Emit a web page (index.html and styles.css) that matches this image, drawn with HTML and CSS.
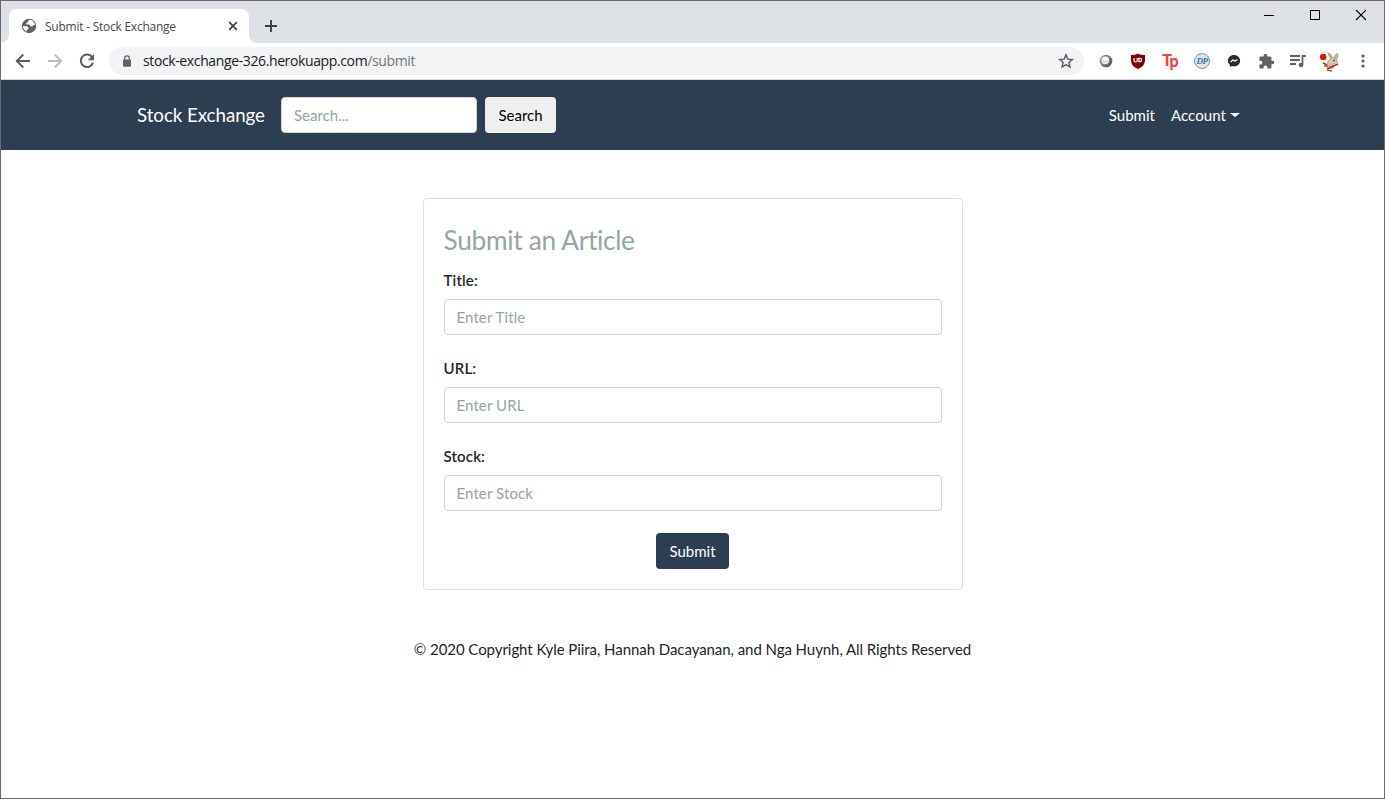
FILE: index.html
```html
<!DOCTYPE html>
<html lang="en">
<head>
<meta charset="utf-8">
<title>Submit - Stock Exchange</title>
<link rel="stylesheet" href="styles.css">
</head>
<body>
<div class="window">
  <div class="tabstrip">
    <div class="tab">
      <svg class="globe" width="16" height="16" viewBox="0 0 16 16"><circle cx="8" cy="8" r="7.2" fill="#5f6368"/><path d="M8.6 1.8 L6.8 3.2 6.9 4.4 5.2 5 5.3 6.4 8.2 6.5 9.7 8.4 11.4 8.6 12.2 7.1 14 7.3 C13.7 4.3 11.4 2 8.6 1.8Z M2 8 L5.7 8.2 7.6 9.8 7.3 11.2 5.9 11.5 5.7 13.6 C3.5 12.7 2 10.7 2 8Z" fill="#fff"/></svg>
      <span class="tab-title">Submit - Stock Exchange</span>
      <svg class="tab-close" width="10" height="10" viewBox="0 0 10 10"><path d="M1.2 1.2 8.8 8.8M8.8 1.2 1.2 8.8" stroke="#3c4043" stroke-width="1.7"/></svg>
    </div>
    <svg class="new-tab" width="14" height="14" viewBox="0 0 14 14"><path d="M7 1V13M1 7H13" stroke="#3c4043" stroke-width="1.9"/></svg>
    <div class="controls">
      <svg width="46" height="29" viewBox="0 0 46 29"><path d="M18 14.5H28" stroke="#000"/></svg>
      <svg width="46" height="29" viewBox="0 0 46 29"><path d="M18.5 9.5h9v9h-9z" fill="none" stroke="#000"/></svg>
      <svg width="46" height="29" viewBox="0 0 46 29"><path d="M18 9 28 19M28 9 18 19" stroke="#000" stroke-width="1.1"/></svg>
    </div>
  </div>

  <div class="toolbar">
    <span class="tool"><svg width="16" height="16" viewBox="0 0 16 16"><path d="M15 8H2M8.3 1.5 1.8 8 8.3 14.5" fill="none" stroke="#5a5e63" stroke-width="1.9"/></svg></span>
    <span class="tool"><svg width="16" height="16" viewBox="0 0 16 16"><path d="M1 8H14M7.7 1.5 14.2 8 7.7 14.5" fill="none" stroke="#babcbe" stroke-width="1.9"/></svg></span>
    <span class="tool"><svg width="16" height="16" viewBox="0 0 16 16"><path d="M13.1 4.2A6.2 6.2 0 1 0 14 9.6" fill="none" stroke="#5a5e63" stroke-width="2"/><path d="M15 1V7.2H8.8Z" fill="#5a5e63"/></svg></span>
    <div class="omnibox">
      <svg width="10" height="13" viewBox="0 0 10 13"><path d="M2.6 5.5V3.3a2.4 2.4 0 0 1 4.8 0v2.2" fill="none" stroke="#5f6368" stroke-width="1.3"/><rect x="1" y="4.6" width="8" height="7.2" rx="1" fill="#5f6368"/></svg>
      <span class="url">stock-exchange-326.herokuapp.com<span class="path">/submit</span></span>
      <svg class="star" width="16" height="16" viewBox="0 0 16 16"><path d="M8 1.8 9.8 6.1 14.4 6.5 10.9 9.5 12 14 8 11.6 4 14 5.1 9.5 1.6 6.5 6.2 6.1Z" fill="none" stroke="#5a5e63" stroke-width="1.4"/></svg>
    </div>
    <span class="tool"><svg width="16" height="16" viewBox="0 0 16 16"><defs><linearGradient id="ring" x1="0" y1="0" x2="1" y2="1"><stop offset="0" stop-color="#a5a5a5"/><stop offset="1" stop-color="#4b4b4b"/></linearGradient></defs><circle cx="8" cy="8" r="6.3" fill="url(#ring)"/><circle cx="7.3" cy="7.3" r="3.9" fill="#f2f2f2"/><path d="M4 8.2q3.4 1.5 6.8-.2" stroke="#ccc" fill="none"/></svg></span>
    <span class="tool"><svg width="16" height="16" viewBox="0 0 16 16"><path d="M8 .4C10 1.7 12.4 2 15 2V6.5C15 12 12 14.2 8 16 4 14.2 1 12 1 6.5V2C3.6 2 6 1.7 8 .4Z" fill="#800006"/><path d="M4 5V7.5Q4 9 5.6 9 7.2 9 7.2 7.5V5" fill="none" stroke="#fff" stroke-width="1.2"/><path d="M8.8 5.4H10A1.6 1.6 0 0 1 10 8.6H8.8Z" fill="none" stroke="#fff" stroke-width="1.2"/></svg></span>
    <span class="tool"><span class="tp">T<span class="tp-low">p</span></span></span>
    <span class="tool"><span class="dp">DP</span></span>
    <span class="tool"><svg width="14" height="14" viewBox="0 0 14 14"><path d="M7 1C3.5 1 .9 3.5.9 6.7c0 1.7.8 3.2 2 4.2v2.2l2-1.1c.7.2 1.4.3 2.1.3 3.5 0 6.1-2.5 6.1-5.6S10.5 1 7 1Z" fill="#2b2b2b"/><path d="M3.6 8.1 6 5.8 7.9 7.2 10.4 5.4" fill="none" stroke="#fff" stroke-width="1.2"/></svg></span>
    <span class="tool"><svg width="17" height="17" viewBox="0 0 24 24"><path d="M20.5 11H19V7c0-1.100-.9-2-2-2h-4V3.500a2.500 2.500 0 0 0-5 0V5H4c-1.100 0-2 .9-2 2v3.800h1.500a2.700 2.700 0 0 1 0 5.400H2V20c0 1.100.9 2 2 2h3.800v-1.500a2.700 2.700 0 0 1 5.400 0V22H17c1.100 0 2-.9 2-2v-4h1.500a2.500 2.500 0 0 0 0-5Z" fill="#5f6368"/></svg></span>
    <span class="tool"><svg width="18" height="16" viewBox="0 0 18 16"><path d="M1 3H11M1 7H11M1 11H7M13.5 12V3H17" fill="none" stroke="#5f6368" stroke-width="1.8"/><circle cx="12" cy="12" r="2.300" fill="#5f6368"/></svg></span>
    <span class="tool"><svg width="24" height="24" viewBox="0 0 24 24"><path d="M5 4Q9 1 12 6" fill="none" stroke="#ddd"/><circle cx="5.2" cy="8" r="3.3" fill="#d91b0b"/><path d="M13 10Q9 5 10.500 4 13 4 14.500 9ZM16 9Q18 3 20 5 21 7 18 11Z" fill="#c4b69e" stroke="#8d7c66" stroke-width=".5"/><path d="M11 11Q14 7 18 10L20 13 15 15 16 19 10 20 8 17Z" fill="#d6c7ab" stroke="#9a896f" stroke-width=".6"/><path d="M5 14 9 16M9 20 13 18 20 15" stroke="#cf2418" stroke-width="1.5"/><path d="M6 17 10 17M9 21 14 22" stroke="#8f7048" stroke-width="1.300"/><circle cx="16" cy="11.500" r=".8" fill="#33261b"/></svg></span>
    <span class="tool menu"><svg width="4" height="16" viewBox="0 0 4 16"><g fill="#5a5e63"><circle cx="2" cy="3" r="1.6"/><circle cx="2" cy="8" r="1.6"/><circle cx="2" cy="13" r="1.6"/></g></svg></span>
  </div>

  <nav class="navbar">
    <a class="brand">Stock Exchange</a>
    <input class="field search" type="text" placeholder="Search...">
    <button class="btn btn-search">Search</button>
    <div class="links"><a>Submit</a><a class="account">Account</a></div>
  </nav>

  <main class="content">
    <form class="card">
      <h3 class="heading">Submit an Article</h3>
      <div class="group"><label>Title:</label><input class="field" type="text" placeholder="Enter Title"></div>
      <div class="group"><label>URL:</label><input class="field" type="text" placeholder="Enter URL"></div>
      <div class="group"><label>Stock:</label><input class="field" type="text" placeholder="Enter Stock"></div>
      <button class="btn btn-submit" type="button">Submit</button>
    </form>
    <footer class="footer">© 2020 Copyright Kyle Piira, Hannah Dacayanan, and Nga Huynh, All Rights Reserved</footer>
  </main>
</div>
</body>
</html>
```
FILE: styles.css
```css
* { box-sizing: border-box; }
body { margin: 0; font: 15px/1.5 Lato, sans-serif; color: #212529; overflow: hidden; }
svg { display: block; flex: none; }
.window { height: 799px; border: 1px solid #68696c; background: #fff; display: flex; flex-direction: column; }

.tabstrip { flex: none; height: 42px; background: #dee1e6; display: flex; align-items: flex-start; padding: 0 0 0 8px; }
.tab { position: relative; width: 240px; height: 34px; margin-top: 8px; padding: 0 11px 0 12px; background: #fff; border-radius: 8px 8px 0 0; display: flex; align-items: center; font: 12px "Open Sans", sans-serif; color: #45494d; }
.tab::before, .tab::after { content: ""; position: absolute; bottom: 0; width: 8px; height: 8px; }
.tab::before { left: -8px; background: radial-gradient(circle at 0 0, transparent 7.5px, #fff 8px); }
.tab::after { right: -8px; background: radial-gradient(circle at 100% 0, transparent 7.5px, #fff 8px); }
.tab-title { margin-left: 8px; white-space: nowrap; letter-spacing: -0.24px; }
.tab-close { margin-left: auto; }
.new-tab { margin: 18px 0 0 15px; }
.controls { display: flex; margin-left: auto; }

.toolbar { flex: none; height: 37px; background: #fff; border-bottom: 1px solid #d5d7da; display: flex; align-items: center; padding-left: 6px; }
.tool { width: 32px; height: 36px; flex: none; display: flex; align-items: center; justify-content: center; }
.menu { padding-left: 1px; }
.omnibox { width: 975px; height: 28px; margin: 0 6px; padding: 0 10px 0 13px; background: #f1f3f4; border-radius: 14px; display: flex; align-items: center; }
.url { margin: -2px 0 0 11px; font: 14px "Open Sans", sans-serif; letter-spacing: -0.38px; color: #202124; white-space: nowrap; }
.path { color: #717579; }
.star { margin-left: auto; }
.tp { font: 900 16px/16px Lato, sans-serif; color: #f5403d; letter-spacing: -1px; margin-top: -2px; }
.tp-low { position: relative; top: 1px; }
.dp { width: 16px; height: 16px; border: 1px solid #6b9ac4; border-radius: 50%; background: #e5e1dc; color: #3475af; font: italic bold 9px/14px "Liberation Serif", serif; text-align: center; letter-spacing: -0.5px; }

.navbar { flex: none; height: 70px; background: #2c3e50; display: flex; align-items: center; padding: 0 144px 0 136px; color: #fff; }
.brand { width: 128px; font-size: 18.75px; letter-spacing: -0.06px; margin-right: 16px; white-space: nowrap; }
.field { display: block; width: 100%; height: 36px; padding: 6px 12px; border: 1px solid #ced4da; border-radius: 4px; background: #fff; font: 15px/22px Lato, sans-serif; color: #7b8a8b; }
.field::placeholder { color: #95a5a6; opacity: 1; }
.group .field { letter-spacing: 0.1px; }
.search { width: 196px; margin-right: 8px; }
.btn { height: 36px; border: 0; border-radius: 4px; font: 15px/22px Lato, sans-serif; padding: 0; }
.btn-search { width: 71px; background: #efefef; color: #000; }
.links { display: flex; gap: 16px; margin-left: auto; }
.account { display: flex; align-items: center; letter-spacing: 0.08px; }
.account::after { content: ""; margin-left: 4px; border: 4.5px solid transparent; border-top-color: #fff; border-bottom: 0; border-left-width: 5px; border-right-width: 5px; }

.content { display: flex; flex-direction: column; align-items: center; padding-top: 48px; }
.card { width: 540px; height: 392px; border: 1px solid #dfdfdf; border-radius: 4px; padding: 25px 20px 20px; display: flex; flex-direction: column; }
.heading { margin: 0 0 13px; font-size: 26.25px; font-weight: 400; line-height: 32px; letter-spacing: -0.31px; color: #95a5a6; }
.group { margin-bottom: 22px; }
.group label { display: block; height: 22px; line-height: 22px; margin-bottom: 8px; font-weight: 600; letter-spacing: 0.15px; }
.btn-submit { width: 73px; align-self: center; background: #2c3e50; color: #fff; }
.footer { margin-top: 48px; white-space: nowrap; letter-spacing: -0.06px; }
```
